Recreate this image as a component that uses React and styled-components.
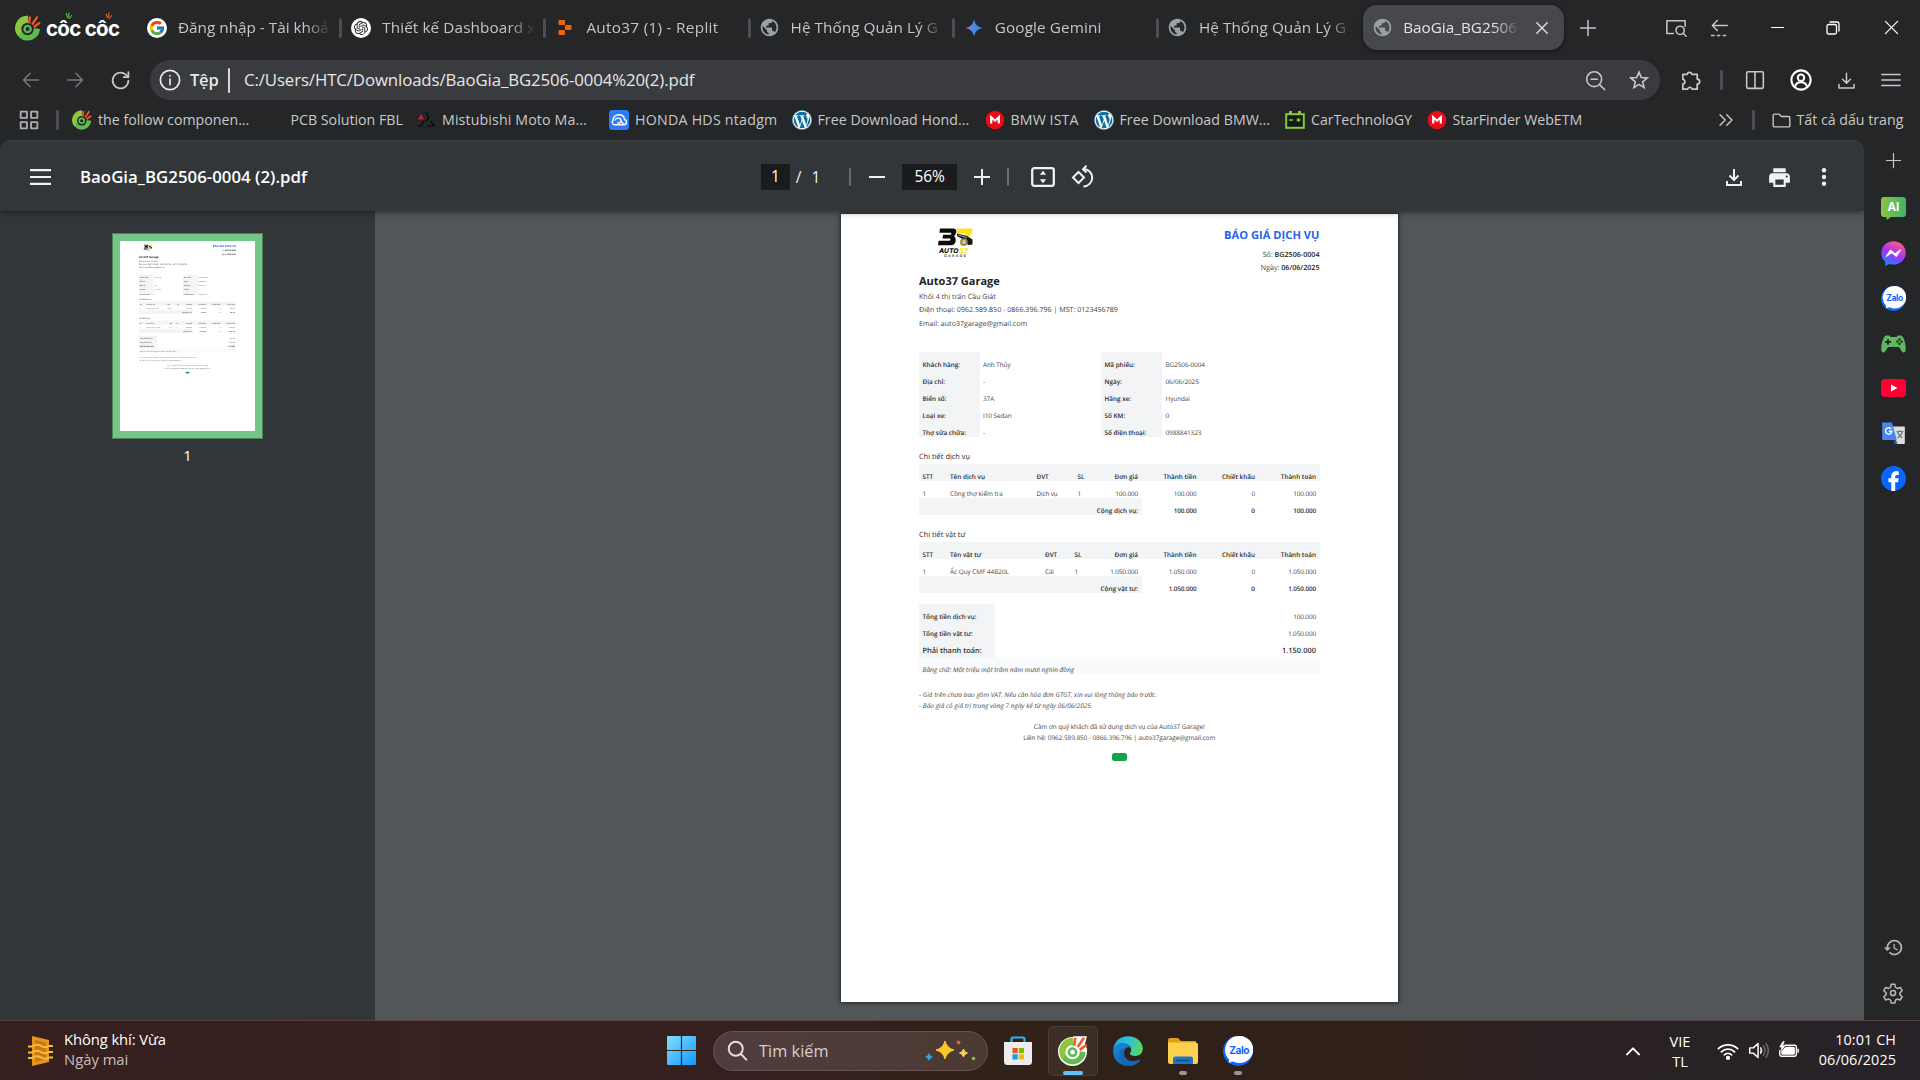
import React from "react";
import styled, { createGlobalStyle, css } from "styled-components";
import { FcGoogle } from "react-icons/fc";
import { SiOpenai } from "react-icons/si";
import { FaWordpress } from "react-icons/fa";
import { MdPublic, MdPrint, MdOutlineHistory } from "react-icons/md";

const Global = createGlobalStyle`
  * { box-sizing: border-box; }
  html, body { margin: 0; padding: 0; background: #242628; }
  body { font-family: "Open Sans", "Noto Sans", sans-serif; overflow: hidden; }
  svg { display: block; flex: none; }
`;

/* ---------- layout ---------- */
const Screen = styled.div`
  width: 1920px;
  height: 1080px;
  display: flex;
  flex-direction: column;
  background: #242628;
  overflow: hidden;
`;
const Row = styled.div`
  display: flex;
  align-items: center;
`;
const Slot = styled.div`
  width: ${(p) => p.$w}px;
  flex: none;
  display: flex;
  align-items: center;
  justify-content: center;
`;
const Txt = styled.span`
  white-space: pre;
  letter-spacing: ${(p) => p.$ls || 0}px;
`;
const Grow = styled.div`
  flex: 1;
`;

/* ---------- tab strip ---------- */
const TabStrip = styled(Row)`
  height: 55px;
  padding-left: 15px;
`;
const Brand = styled(Row)`
  width: 123px;
  flex: none;
  gap: 5px;
`;
const BrandText = styled.span`
  position: relative;
  font-family: Inter, "Open Sans", sans-serif;
  font-weight: 700;
  font-size: 20.5px;
  line-height: 24px;
  letter-spacing: -0.7px;
  color: #fff;
  white-space: pre;
  padding-top: 3px;
`;
const Ticks = styled.svg`
  position: absolute;
  left: ${(p) => p.$x}px;
  top: -2px;
`;
const Tab = styled.div`
  width: ${(p) => (p.$active ? 201 : 204.2)}px;
  height: 45px;
  flex: none;
  display: flex;
  align-items: center;
  padding-left: 9px;
  border-radius: 14px;
  color: ${(p) => (p.$active ? "#e3e3e3" : "#c3c5c7")};
  background: ${(p) => (p.$active ? "#47484c" : "transparent")};
  box-shadow: ${(p) => (p.$active ? "0 1px 4px rgba(0,0,0,.5)" : "none")};
`;
const TabTitle = styled.div`
  width: ${(p) => p.$w}px;
  margin-left: 11px;
  font-size: 15.3px;
  letter-spacing: ${(p) => p.$ls || 0}px;
  line-height: 24px;
  padding-bottom: 2px;
  white-space: pre;
  overflow: hidden;
  mask-image: linear-gradient(90deg, #000 calc(100% - 26px), transparent);
`;
const TabDivider = styled.div`
  width: 3px;
  height: 20px;
  margin-left: 8px;
  background: #4b4d50;
  border-radius: 2px;
`;

/* ---------- address row ---------- */
const AddressRow = styled(Row)`
  height: 50px;
  padding-left: 9px;
  color: #c7c8ca;
`;
const Omnibox = styled(Row)`
  width: 1510px;
  height: 40px;
  margin-left: 7px;
  border-radius: 20px;
  background: #3a3b3f;
  padding-left: 8px;
  color: #e6e7e8;
  font-size: 16.8px;
`;
const Scheme = styled.span`
  width: 38px;
  margin-left: 8px;
  padding-bottom: 2px;
  font-size: 16.5px;
  font-weight: 600;
  letter-spacing: -0.2px;
`;
const Bar = styled.div`
  width: ${(p) => p.$w || 2}px;
  height: ${(p) => p.$h || 20}px;
  background: ${(p) => p.$c || "#4b4d50"};
  border-radius: 1px;
  flex: none;
`;
const Url = styled.span`
  flex: 1;
  margin-left: 14px;
  padding-bottom: 2px;
  letter-spacing: ${(p) => p.$ls}px;
`;

/* ---------- bookmarks ---------- */
const Bookmarks = styled(Row)`
  height: 40px;
  padding: 5px 0;
  padding-left: 2px;
  color: #c7c8ca;
  font-size: 14.2px;
  margin-top: -5px;
`;
const Bookmark = styled.div`
  width: ${(p) => p.$w}px;
  flex: none;
  display: flex;
  align-items: center;
  gap: 6px;
  white-space: pre;
  letter-spacing: ${(p) => p.$ls || 0}px;
`;
const BookmarkName = styled.span`
  padding-bottom: 2px;
`;

/* ---------- pdf viewer ---------- */
const Main = styled.div`
  flex: none;
  height: 880px;
  display: flex;
`;
const Viewer = styled.div`
  width: 1864px;
  display: flex;
  flex-direction: column;
  border-radius: 10px 10px 0 0;
  overflow: hidden;
  background: #323639;
`;
const PdfBar = styled(Row)`
  height: 71px;
  flex: none;
  position: relative;
  z-index: 2;
  padding-top: 2px;
  padding-left: 16px;
  background: #323639;
  border-top: 1px solid #3b3e41;
  box-shadow: 0 1px 6px rgba(0, 0, 0, 0.5);
  color: #f1f1f1;
  font-size: 15.5px;
`;
const PdfTitle = styled.div`
  width: 681px;
  padding-left: 15px;
  padding-bottom: 1px;
  font-weight: 600;
  font-size: 16.8px;
  color: #fff;
  white-space: pre;
  letter-spacing: ${(p) => p.$ls}px;
`;
const Field = styled.div`
  width: ${(p) => p.$w}px;
  height: 26px;
  line-height: 25px;
  text-align: center;
  background: #191b1c;
  color: #fff;
  letter-spacing: -0.1px;
`;
const PdfBody = styled.div`
  flex: 1;
  display: flex;
  min-height: 0;
`;
const Thumbs = styled.div`
  width: 375px;
  flex: none;
  display: flex;
  flex-direction: column;
  align-items: center;
  padding-top: 22px;
  background: #323639;
  color: #fff;
  font-size: 15px;
`;
const ThumbFrame = styled.div`
  width: 151px;
  height: 206px;
  border: 1px solid #4f8259;
  background: #74c686;
  padding: 7px;
`;
const ThumbClip = styled.div`
  width: 135px;
  height: 190px;
  overflow: hidden;
  background: #fff;
`;
const ThumbScale = styled.div`
  width: 557px;
  transform: scale(0.2424);
  transform-origin: 0 0;
`;
const ThumbNo = styled.div`
  margin-top: 5px;
  line-height: 22px;
`;
const Canvas = styled.div`
  flex: 1;
  background: #525659;
  display: flex;
  justify-content: center;
  padding-top: 3px;
`;
const Sheet = styled.div`
  width: 557px;
  height: 788px;
  flex: none;
  background: #fff;
  padding: 13px 78.5px 0 78px;
  color: #444;
  text-rendering: geometricPrecision;
  box-shadow: ${(p) => (p.$flat ? "none" : "0 0 4px 1px rgba(0,0,0,.55)")};
`;
const SheetTop = styled.div`
  display: flex;
  justify-content: space-between;
  height: 47px;
`;
const Logo = styled.svg`
  margin-left: 19px;
  margin-top: 1px;
`;
const Heading = styled.div`
  text-align: right;
  font-size: 7.1px;
  line-height: 13.3px;
  b { color: #222; font-weight: 600; letter-spacing: 0.03px; }
`;
const DocTitle = styled.div`
  color: #2563eb;
  font-weight: 700;
  font-size: 11.1px;
  line-height: 18px;
  margin-bottom: 4px;
  letter-spacing: ${(p) => p.$ls}px;
`;
const Garage = styled.div`
  font-weight: 700;
  font-size: 11px;
  line-height: 16px;
  color: #222;
  letter-spacing: 0px;
  margin-bottom: 0.8px;
`;
const Contact = styled.div`
  font-size: 7.1px;
  line-height: 13.4px;
  white-space: pre;
  letter-spacing: 0.01px;
`;
const InfoGrid = styled.div`
  display: grid;
  grid-template-columns: 60.5px 121.5px 61px 1fr;
  grid-auto-rows: 17px;
  margin-top: 21.2px;
  font-size: 6.35px;
`;
const Cell = styled.div`
  height: ${(p) => p.$h || 17}px;
  padding: ${(p) => p.$pt || 7.4}px 3.5px 0;
  line-height: 10px;
  white-space: nowrap;
  text-align: ${(p) => p.$align || "left"};
  background: ${(p) => (p.$fill ? "#f3f4f6" : "transparent")};
  ${(p) => p.$bold && css`font-weight: 600; color: #2d2d2d;`}
  ${(p) => p.$span && css`grid-column: span ${p.$span};`}
  font-size: ${(p) => (p.$fs ? p.$fs + "px" : "inherit")};
  letter-spacing: ${(p) => p.$ls || 0}px;
`;
const SectionTitle = styled.div`
  margin-top: ${(p) => p.$mt}px;
  font-size: 7.3px;
  line-height: 11px;
  font-weight: 500;
  color: #222;
  letter-spacing: 0.06px;
`;
const Items = styled.div`
  display: grid;
  grid-template-columns: ${(p) => p.$cols};
  grid-auto-rows: 17px;
  margin-top: 1px;
  font-size: 6.35px;
`;
const Totals = styled.div`
  display: grid;
  grid-template-columns: 75.7px 1fr;
  margin-top: 11px;
  font-size: 6.35px;
`;
const Words = styled.div`
  height: 17px;
  padding: 7.4px 3.5px 0;
  line-height: 10px;
  font-size: 6.4px;
  letter-spacing: 0.06px;
  font-style: italic;
  background: #f9fafb;
`;
const Notes = styled.div`
  margin-top: 14.5px;
  font-size: 6.4px;
  letter-spacing: 0.05px;
  line-height: 11.4px;
  font-style: italic;
`;
const Thanks = styled.div`
  margin-top: 9.5px;
  font-size: 6.4px;
  letter-spacing: -0.04px;
  line-height: 11.4px;
  text-align: center;
`;
const Pill = styled.div`
  width: 15px;
  height: 8px;
  margin: 9px auto 0;
  border-radius: 2.5px;
  background: #16a34a;
`;

/* ---------- side panel ---------- */
const Side = styled.div`
  width: 56px;
  display: flex;
  flex-direction: column;
  align-items: center;
  padding: 0 0 5px 2px;
  color: #c3c5c7;
`;
const SideItem = styled.div`
  height: ${(p) => p.$h || 45}px;
  flex: none;
  display: flex;
  align-items: center;
`;

/* ---------- taskbar ---------- */
const Taskbar = styled(Row)`
  height: 60px;
  flex: none;
  border-top: 1px solid #51403f;
  background: linear-gradient(90deg, #35201f 0%, #38211f 22%, #35201e 42%, #322118 52%, #2e2119 60%, #302019 72%, #2c2122 80%, #272226 90%, #272328 100%);
  color: #fff;
  font-size: 14.8px;
`;
const Weather = styled(Row)`
  width: 639px;
  flex: none;
  padding-left: 28px;
  gap: 11px;
  line-height: 20px;
`;
const WeatherText = styled.div`
  display: flex;
  flex-direction: column;
  padding-bottom: 3px;
`;
const Muted = styled.div`
  color: #c9bebd;
  white-space: pre;
`;
const Search = styled(Row)`
  width: 275px;
  flex: none;
  height: 40px;
  border-radius: 20px;
  border: 1px solid #66534f;
  background: linear-gradient(90deg, #503d3e, #4b3a33);
  padding: 0 11px 0 13px;
  gap: 11px;
  color: #d8d0ce;
  font-size: 16.3px;
`;
const AppSlot = styled.div`
  width: 50px;
  height: 50px;
  flex: none;
  margin-right: 5px;
  border-radius: 5px;
  position: relative;
  display: flex;
  align-items: center;
  justify-content: center;
  background: ${(p) => (p.$active ? "rgba(255,255,255,.06)" : "transparent")};
  border: 1px solid ${(p) => (p.$active ? "rgba(255,255,255,.07)" : "transparent")};
`;
const Mark = styled.div`
  position: absolute;
  bottom: 0px;
  left: ${(p) => (p.$on ? 14 : 20)}px;
  width: ${(p) => (p.$on ? 20 : 8)}px;
  height: 4px;
  border-radius: 2px;
  background: ${(p) => (p.$on ? "#60c2f8" : "#9c9492")};
`;
const Lang = styled.div`
  width: 50px;
  text-align: center;
  font-size: 14.6px;
  line-height: 20px;
`;
const Clock = styled.div`
  margin-left: auto;
  padding-right: 24px;
  text-align: right;
  font-size: 14.4px;
  line-height: 20px;
  letter-spacing: 0.08px;
  padding-bottom: 1px;
`;

/* ---------- drawings ---------- */
const Line = ({ s = 24, sw = 1.5, children, vb = 24, color = "currentColor" }) => (
  <svg width={s} height={s} viewBox={`0 0 ${vb} ${vb}`} fill="none" stroke={color} strokeWidth={sw} strokeLinecap="round" strokeLinejoin="round">
    {children}
  </svg>
);
const CocCoc = ({ s = 26, ring }) => (
  <svg width={s} height={s} viewBox="0 0 26 26">
    {ring && <circle cx="12.6" cy="13.4" r="12.6" fill="#fff" />}
    {ring && <path d="M13 .3h12l-3 13z" fill="#fff" />}
    <path d={ring ? "M13 1.8A11.4 11.4 0 1 0 24 14l-6-1-5-5z" : "M13 .8A12.4 12.4 0 1 0 25 14l-7-1-5-5z"} fill="#5fbb4c" />
    <path d={ring ? "M13 1.8A11.4 11.4 0 0 0 4 20.5L13 8z" : "M13 .8A12.4 12.4 0 0 0 3 21L13 8z"} fill="#8cc63f" />
    <circle cx="12.6" cy="14" r="6.2" fill={ring ? "#fff" : "#242628"} />
    <circle cx="12.6" cy="14" r="4.3" fill="#5cb85a" />
    <circle cx="12.6" cy="14" r="2" fill={ring ? "#fff" : "#242628"} />
    {ring && <path d="M13 9V1h11.5L19 13z" fill="#fff" />}
    <path d="M14 8.5L15 1.5M17 9.6L22.6 1.6M18.8 12L25 7.6" stroke="#f1592a" strokeWidth="2.3" />
  </svg>
);
const Globe = () => <MdPublic size={21} color="#9aa0a6" />;
const Replit = () => (
  <svg width="20" height="20" viewBox="0 0 20 20" fill="#f26207">
    <rect x="3.5" y="2" width="6.5" height="5" rx="1" />
    <rect x="10" y="7" width="6.5" height="5" rx="1" />
    <rect x="3.5" y="12" width="6.5" height="5" rx="1" />
  </svg>
);
const Openai = () => (
  <svg width="20" height="20" viewBox="0 0 20 20">
    <circle cx="10" cy="10" r="10" fill="#fff" />
    <SiOpenai x="3" y="3" size={14} color="#222" />
  </svg>
);
const GoogleDisc = () => (
  <svg width="20" height="20" viewBox="0 0 20 20">
    <circle cx="10" cy="10" r="10" fill="#fff" />
    <FcGoogle x="1.5" y="1.5" size={17} />
  </svg>
);
const Gemini = () => (
  <svg width="20" height="20" viewBox="0 0 20 20">
    <defs>
      <linearGradient id="gem" x1="0" x2="1">
        <stop offset="0.1" stopColor="#9b72cb" />
        <stop offset="0.5" stopColor="#4b84e8" />
        <stop offset="0.9" stopColor="#1ba1e3" />
      </linearGradient>
    </defs>
    <path d="M10 1.5Q11.3 8.7 18.5 10Q11.3 11.3 10 18.5Q8.7 11.3 1.5 10Q8.7 8.7 10 1.5z" fill="url(#gem)" />
  </svg>
);
const Wp = () => (
  <svg width="20" height="20" viewBox="0 0 20 20">
    <circle cx="10" cy="10" r="9.8" fill="#fff" />
    <FaWordpress x="0" y="0" size={20} color="#0f6fa0" />
  </svg>
);
const Mega = () => (
  <svg width="20" height="20" viewBox="0 0 20 20">
    <circle cx="10" cy="10" r="9.3" fill="#e90c18" />
    <path d="M6.2 13.5V7.3L10 10.8L13.8 7.3V13.5" fill="none" stroke="#fff" strokeWidth="2.2" />
  </svg>
);
const Battery = () => (
  <svg width="20" height="20" viewBox="0 0 20 20">
    <path d="M4 1h3v3h6V1h3v3H4z" fill="#8ac53e" />
    <rect x="1.2" y="4.2" width="17.6" height="13.6" fill="#121b12" stroke="#8ac53e" strokeWidth="2" />
    <path d="M4 10h4M11.5 10h4M13.5 8v4" stroke="#8ac53e" strokeWidth="1.6" />
  </svg>
);
const Honda = () => (
  <svg width="20" height="20" viewBox="0 0 20 20">
    <rect width="20" height="20" rx="3" fill="#2a7cf7" />
    <path d="M5.2 14.8A2.7 2.7 0 0 1 4 10.3C4 7 6.8 4.8 10 4.8s5.2 2.2 5.5 4.7c2.8 .8 2.8 5-.7 5.3H5.2M6 10.5c.5-3 5.5-3.3 6 0 .3 2.3-2.5 3.3-3.5 1.8M12 10.5c.5 2 1.5 3.3 3 4.2" fill="none" stroke="#fff" strokeWidth="1.4" />
  </svg>
);
const Mitsu = () => (
  <svg width="20" height="20" viewBox="0 0 20 20">
    <path d="M5 4l3 5.5H2z" fill="#d81f26" />
    <path d="M10 2l3 6-3 3M12 16h6l-3-5M8 11l-3 5H2" fill="none" stroke="#0c0c0c" strokeWidth="1.6" />
  </svg>
);
const Zalo = ({ s = 25 }) => (
  <svg width={s} height={s} viewBox="0 0 26 26">
    <circle cx="13" cy="13" r="13" fill="#0a68ff" />
    <path d="M14 0a11.7 11.7 0 1 1-5 22l-4.5 1.2c1-1 1-2 .6-3A12 12 0 0 1 14 0z" fill="#fff" />
    <text x="14" y="15.3" fontSize="8.8" fontWeight="700" fill="#0a68ff" textAnchor="middle" fontFamily="Inter, sans-serif" letterSpacing="-.4">Zalo</text>
  </svg>
);
const AiBubble = () => (
  <svg width="25" height="25" viewBox="0 0 25 25">
    <defs>
      <linearGradient id="ai" x1="0" x2="1">
        <stop offset="0" stopColor="#8bc53f" />
        <stop offset="1" stopColor="#3fb36b" />
      </linearGradient>
    </defs>
    <path d="M3 2h19a3 3 0 0 1 3 3v14a3 3 0 0 1-3 3H10l-4.5 3V22H3a3 3 0 0 1-3-3V5a3 3 0 0 1 3-3z" fill="url(#ai)" />
    <text x="12.3" y="15.5" fontSize="11.5" fontWeight="700" fill="#fff" textAnchor="middle" fontFamily="Inter, sans-serif">AI</text>
  </svg>
);
const Messenger = () => (
  <svg width="25" height="25" viewBox="0 0 25 25">
    <defs>
      <linearGradient id="ms" x1="0.2" y1="1" x2="0.7" y2="0">
        <stop offset="0" stopColor="#0a8cff" />
        <stop offset="0.5" stopColor="#a033ff" />
        <stop offset="1" stopColor="#ff5c7a" />
      </linearGradient>
    </defs>
    <path d="M12.5 .3C5.5 .3 .3 5.4 .3 12.1c0 3.6 1.5 6.7 4 8.9V25l3.8-2.1c1.4 .4 2.9 .7 4.4 .7 7 0 12.2-5.1 12.2-11.7S19.5 .3 12.5 .3z" fill="url(#ms)" />
    <path d="M5.3 15.3L9.6 9.2l4.4 3.9L19.5 9l-4.2 6.3-4.4-3.8z" fill="#fff" stroke="#fff" strokeWidth="1.2" strokeLinejoin="round" />
  </svg>
);
const Gamepad = () => (
  <svg width="25" height="18" viewBox="0 0 25 18">
    <path d="M5.5 .5h3l1 1.5h6l1-1.5h3c3 0 5.3 7.5 5.3 14 0 3.5-2.8 3.8-4.3 1.5L18 12H7l-2.5 4C3 18.3 .2 18 .2 14.5 .2 8 2.5 .5 5.5 .5z" fill="#5fb761" />
    <path d="M7 4.2v5.6M4.2 7h5.6" stroke="#242628" strokeWidth="1.8" />
    <g fill="#242628"><circle cx="18.5" cy="4.5" r="1.2" /><circle cx="18.5" cy="8.8" r="1.2" /><circle cx="16.3" cy="6.6" r="1.2" /><circle cx="20.7" cy="6.6" r="1.2" /></g>
  </svg>
);
const Youtube = () => (
  <svg width="25" height="18" viewBox="0 0 25 18">
    <rect width="25" height="18" rx="4" fill="#ff0033" />
    <path d="M10 5.5l6.5 3.5L10 12.5z" fill="#fff" />
  </svg>
);
const Translate = () => (
  <svg width="23" height="23" viewBox="0 0 23 23">
    <path d="M10 4.5h12q.8 0 .8 .8V21q0 .9-.8 .9h-8z" fill="#dedede" />
    <path d="M11.5 21.8h4l-2-5z" fill="#3a56c5" />
    <path d="M.9 .5H10l4.8 17.5H.9Q.2 18 .2 17.3V1.2Q.2 .5 .9 .5z" fill="#4a86ee" />
    <path d="M14.5 9.5h7M18 8v1.5M15.5 9.5q1 4 5 6.5M20.5 9.5q-1 4-5 6.5" stroke="#6b7f86" strokeWidth="1.2" fill="none" />
    <path d="M9.3 7a3.2 3.2 0 1 0 .6 2.2H6.8" stroke="#fff" strokeWidth="1.4" fill="none" />
  </svg>
);
const Facebook = () => (
  <svg width="25" height="25" viewBox="0 0 25 25">
    <circle cx="12.5" cy="12.5" r="12.5" fill="#0866ff" />
    <path d="M10.3 25v-8.7H7.4v-4h2.9v-1.6c0-3.8 2-5.5 5-5.5 1 0 1.9 .1 2.5 .3v3.4h-1.6c-1.6 0-2 .8-2 2v1.4h3.5l-.7 4h-2.8V25z" fill="#fff" />
  </svg>
);
const WinLogo = () => (
  <svg width="29" height="29" viewBox="0 0 29 29">
    <defs>
      <linearGradient id="wn" x1="0" y1="0" x2="1" y2="1">
        <stop offset="0" stopColor="#83e0ff" /><stop offset="1" stopColor="#0f98ff" />
      </linearGradient>
    </defs>
    <path d="M1 0h12.9v13.9H0V1q0-1 1-1zM15.1 0H28q1 0 1 1v12.9H15.1zM0 15.1h13.9V29H1q-1 0-1-1zM15.1 15.1H29V28q0 1-1 1H15.1z" fill="url(#wn)" />
  </svg>
);
const Star4 = ({ x, y, r, c }) => (
  <path d={`M${x} ${y - r}Q${x + r * 0.2} ${y - r * 0.2} ${x + r} ${y}Q${x + r * 0.2} ${y + r * 0.2} ${x} ${y + r}Q${x - r * 0.2} ${y + r * 0.2} ${x - r} ${y}Q${x - r * 0.2} ${y - r * 0.2} ${x} ${y - r}z`} fill={c} stroke={c} strokeWidth="1" strokeLinejoin="round" />
);
const Sparkles = () => (
  <svg width="52" height="24" viewBox="0 0 52 24">
    <Star4 x={21} y={11} r={9} c="#fbc72d" />
    <Star4 x={39.5} y={14} r={4} c="#fbcf5a" />
    <Star4 x={5} y={18} r={3.2} c="#2aa5f0" />
    <circle cx="34.5" cy="3.5" r="2" fill="#e2603a" />
    <circle cx="49.5" cy="19.5" r="1.8" fill="#8cc04a" />
  </svg>
);
const Store = () => (
  <svg width="30" height="30" viewBox="0 0 30 30">
    <path d="M8.5 7V3q0-1.5 1.5-1.5h10q1.5 0 1.5 1.5v4" fill="none" stroke="#29b5f0" strokeWidth="2.2" />
    <path d="M1 6h28v19.5q0 3.5-3.5 3.5h-21Q1 29 1 25.5z" fill="#ededed" />
    <path d="M9.5 12h5.2v5.2H9.5z" fill="#f25022" /><path d="M15.8 12H21v5.2h-5.2z" fill="#7fba00" />
    <path d="M9.5 18.3h5.2v5.2H9.5z" fill="#00a4ef" /><path d="M15.8 18.3H21v5.2h-5.2z" fill="#ffb900" />
  </svg>
);
const Edge = () => (
  <svg width="30" height="30" viewBox="0 0 30 30">
    <defs>
      <linearGradient id="e1" x1="0" y1="0.3" x2="1" y2="0.5"><stop offset="0" stopColor="#23a6e0" /><stop offset="0.5" stopColor="#2ec3d8" /><stop offset="1" stopColor="#5bd95a" /></linearGradient>
      <linearGradient id="e2" x1="0" y1="0" x2="1" y2="1"><stop offset="0" stopColor="#1b8edb" /><stop offset="1" stopColor="#0f4f9e" /></linearGradient>
    </defs>
    <path d="M.3 13C1.2 5.5 7 .2 15 .2c9 0 14.8 6 14.8 12.3 0 4.6-3.3 7.5-7.6 7.5-3.5 0-5.3-1.3-5.3-2.5 0-.9 1.3-1.5 1.3-3.8 0-3.4-3.6-6.2-8.2-6.2C5.5 7.5 2 9.5 .3 13z" fill="url(#e1)" />
    <path d="M.2 14.5C.8 9.8 5 7.3 10 7.3c3.5 0 6.5 1.7 7.7 4.2-1.5-.9-6.7-.5-6.7 5.5 0 6.5 6 10 10.5 8.8l4.5-2c1-.4 1.5 .3 1 1C24.5 28 20 30 15.5 30 6.5 30-.7 23 .2 14.5z" fill="url(#e2)" />
    <path d="M11 17c0-3 1.5-4.7 3-5.2-5-.6-8 3.2-7.5 8 .5 5.2 4.8 9.7 10.5 10 4-.2 8-2.3 9.8-5.2 .4-.8-.2-1.2-1-.8-6.8 3.6-14.8 .2-14.8-6.8z" fill="#1466b8" />
  </svg>
);
const Folder = () => (
  <svg width="30" height="28" viewBox="0 0 30 28">
    <path d="M0 3q0-2 2-2h8l3 3h15v6H0z" fill="#e0a010" />
    <path d="M0 5.5h27.5Q30 5.5 30 8v17q0 2-2 2H2q-2 0-2-2z" fill="#fdd04e" />
    <path d="M5 27v-5q0-2.5 2.5-2.5h15Q25 19.5 25 22v5z" fill="#1976c9" />
    <path d="M8 23.5h13" stroke="#0f4f90" strokeWidth="1.5" />
  </svg>
);
const AirIcon = () => (
  <svg width="25" height="30" viewBox="0 0 25 30">
    <path d="M4 0l17 4v22L4 30z" fill="#e8951c" />
    <path d="M7 4l11 2.5v17L7 26z" fill="#c87a10" />
    <path d="M0 10.5h4q5-3 9-.5t8 0h4M0 16.5h4q5-3 9-.5t8 0h4M0 22h4q5-3 9-.5t8 0h4" stroke="#f5bd3f" strokeWidth="2" fill="none" />
  </svg>
);
const GarageLogo = () => (
  <Logo width="36" height="31" viewBox="0 0 36 31">
    <path d="M19 0.5h15.5l-.6 4.5q-5 5-6 12.5h-6q1-7 6-12h-9z" fill="#ffe11a" />
    <path d="M2 .5h13q3.5 0 3.3 3.2-.2 3-2.3 4.6 2 1 1.8 4-.3 5-5 5H0l.6-4.5h10.4q1.5 0 1.6-1.2t-1.3-1.2H4.5l.6-3.7h6.7q1.5 0 1.6-1t-1.3-1H1.4z" fill="#0b0b0b" />
    <path d="M19 5.5l10 2.5 5.5 3.5v5l-4.5 .5-3-4.5-8-4.5z" fill="#151515" />
    <path d="M20 7l9 2.5" stroke="#fff" strokeWidth=".6" />
    <circle cx="26" cy="14" r="3.8" fill="#8b8350" /><circle cx="26" cy="14" r="2" fill="#ddd08a" />
    <text x="1" y="25.2" fontSize="6.5" fontWeight="800" fontStyle="italic" fontFamily="Inter, sans-serif" textLength="19.5" lengthAdjust="spacingAndGlyphs" fill="#111">AUTO</text>
    <text x="20.8" y="25.2" fontSize="6.5" fontWeight="800" fontStyle="italic" fontFamily="Inter, sans-serif" textLength="9.5" lengthAdjust="spacingAndGlyphs" fill="#ffe11a">37</text>
    <text x="6" y="29" fontSize="3.6" fontWeight="600" fontFamily="Inter, sans-serif" textLength="22" fill="#333">GARAGE</text>
  </Logo>
);

/* ---------- quotation ---------- */
const info = [
  ["Khách hàng:", "Anh Thủy", "Mã phiếu:", "BG2506-0004"],
  ["Địa chỉ:", "-", "Ngày:", "06/06/2025"],
  ["Biển số:", "37A", "Hãng xe:", "Hyundai"],
  ["Loại xe:", "I10 Sedan", "Số KM:", "0"],
  ["Thợ sửa chữa:", "-", "Số điện thoại:", "0988841323"],
];
const aligns = ["left", "left", "left", "left", "right", "right", "right", "right"];

const ItemTable = ({ cols, head, row, label, sum }) => (
  <Items $cols={cols}>
    {head.map((h, i) => (
      <Cell key={h} $fill $bold $ls={0.01} $align={aligns[i]}>{h}</Cell>
    ))}
    {row.map((v, i) => (
      <Cell key={i} $align={aligns[i]} $ls={i === 1 ? 0 : -0.1}>{v}</Cell>
    ))}
    <Cell $fill $span={5} $align="right" $bold $ls={0.03}>{label}</Cell>
    <Cell $bold $align="right" $ls={-0.12}>{sum}</Cell>
    <Cell $bold $align="right">0</Cell>
    <Cell $bold $align="right" $ls={-0.12}>{sum}</Cell>
  </Items>
);

const Quotation = ({ flat }) => (
  <Sheet $flat={flat}>
    <SheetTop>
      <GarageLogo />
      <Heading>
        <DocTitle $ls={0.03}>BÁO GIÁ DỊCH VỤ</DocTitle>
        <div>Số: <b>BG2506-0004</b></div>
        <div>Ngày: <b>06/06/2025</b></div>
      </Heading>
    </SheetTop>
    <Garage>Auto37 Garage</Garage>
    <Contact>Khối 4 thị trấn Cầu Giát</Contact>
    <Contact>Điện thoại: 0962.589.850 - 0866.396.796 | MST: 0123456789</Contact>
    <Contact>Email: auto37garage@gmail.com</Contact>
    <InfoGrid>
      {info.map(([a, b, c, d]) => (
        <React.Fragment key={a}>
          <Cell $fill $bold>{a}</Cell>
          <Cell $ls={-0.04}>{b}</Cell>
          <Cell $fill $bold>{c}</Cell>
          <Cell $ls={-0.04}>{d}</Cell>
        </React.Fragment>
      ))}
    </InfoGrid>
    <SectionTitle $mt={15}>Chi tiết dịch vụ</SectionTitle>
    <ItemTable
      cols="27.5px 86.5px 41px 21.5px 46px 58.5px 58.5px 61px"
      head={["STT", "Tên dịch vụ", "ĐVT", "SL", "Đơn giá", "Thành tiền", "Chiết khấu", "Thành toán"]}
      row={["1", "Công thợ kiểm tra", "Dịch vụ", "1", "100.000", "100.000", "0", "100.000"]}
      label="Cộng dịch vụ:"
      sum="100.000"
    />
    <SectionTitle $mt={15}>Chi tiết vật tư</SectionTitle>
    <ItemTable
      cols="27.5px 95px 29.5px 24.5px 46px 58.5px 58.5px 61px"
      head={["STT", "Tên vật tư", "ĐVT", "SL", "Đơn giá", "Thành tiền", "Chiết khấu", "Thành toán"]}
      row={["1", "Ắc Quy CMF 44B20L", "Cái", "1", "1.050.000", "1.050.000", "0", "1.050.000"]}
      label="Cộng vật tư:"
      sum="1.050.000"
    />
    <Totals>
      <Cell $fill $bold>Tổng tiền dịch vụ:</Cell>
      <Cell $align="right" $ls={-0.08}>100.000</Cell>
      <Cell $fill $bold>Tổng tiền vật tư:</Cell>
      <Cell $align="right" $ls={-0.08}>1.050.000</Cell>
      <Cell $fill $bold $fs={7.4} $h={19} $pt={8}>Phải thanh toán:</Cell>
      <Cell $bold $align="right" $fs={7.4} $h={19} $pt={8} $ls={0.05}>1.150.000</Cell>
    </Totals>
    <Words>Bằng chữ: Một triệu một trăm năm mươi nghìn đồng</Words>
    <Notes>
      <div>- Giá trên chưa bao gồm VAT. Nếu cần hóa đơn GTGT, xin vui lòng thông báo trước.</div>
      <div>- Báo giá có giá trị trong vòng 7 ngày kể từ ngày 06/06/2025.</div>
    </Notes>
    <Thanks>
      <div>Cảm ơn quý khách đã sử dụng dịch vụ của Auto37 Garage!</div>
      <div>Liên hệ: 0962.589.850 - 0866.396.796 | auto37garage@gmail.com</div>
    </Thanks>
    <Pill />
  </Sheet>
);

const tabs = [
  { icon: <GoogleDisc />, title: "Đăng nhập - Tài khoả", ls: 0 },
  { icon: <Openai />, title: "Thiết kế Dashboard x", ls: 0.1 },
  { icon: <Replit />, title: "Auto37 (1) - Replit", ls: 0.3 },
  { icon: <Globe />, title: "Hệ Thống Quản Lý G", ls: 0.05 },
  { icon: <Gemini />, title: "Google Gemini", ls: 0.12 },
  { icon: <Globe />, title: "Hệ Thống Quản Lý G", ls: 0.05 },
];

const bookmarks = [
  { w: 192.5, ls: 0, icon: <CocCoc s={20} />, text: "the follow componen..." },
  { w: 151.5, ls: 0, icon: <svg width="20" height="20" />, text: "PCB Solution FBL" },
  { w: 193, ls: 0.13, icon: <Mitsu />, text: "Mistubishi Moto Ma..." },
  { w: 182.5, ls: 0.25, icon: <Honda />, text: "HONDA HDS ntadgm" },
  { w: 193, ls: 0.03, icon: <Wp />, text: "Free Download Hond..." },
  { w: 109, ls: 0.1, icon: <Mega />, text: "BMW ISTA" },
  { w: 191.5, ls: 0.04, icon: <Wp />, text: "Free Download BMW..." },
  { w: 141.5, ls: -0.05, icon: <Battery />, text: "CarTechnoloGY" },
  { w: 290, ls: -0.05, icon: <Mega />, text: "StarFinder WebETM" },
];

export default function App() {
  return (
    <Screen>
      <Global />
      <TabStrip>
        <Brand>
          <CocCoc />
          <BrandText>
            côc côc
            <Ticks $x={19} width="8" height="9" viewBox="0 0 8 9"><path d="M1 1l2 5M4 .5l-.5 5M7 3L4 7" stroke="#4fb648" strokeWidth="1.2" /></Ticks>
            <Ticks $x={59} width="8" height="9" viewBox="0 0 8 9"><path d="M1 2l2 4M4 .5l-.5 5M7 3L4 7" stroke="#f1592a" strokeWidth="1.2" /></Ticks>
          </BrandText>
        </Brand>
        {tabs.map((t, i) => (
          <Tab key={i}>
            <Slot $w={20}>{t.icon}</Slot>
            <TabTitle $w={154} $ls={t.ls}>{t.title}</TabTitle>
            {i < 5 && <TabDivider />}
          </Tab>
        ))}
        <Tab $active>
          <Slot $w={20}><Globe /></Slot>
          <TabTitle $w={117} $ls={0}>BaoGia_BG2506-</TabTitle>
          <Slot $w={43}><Line s={18} sw={1.8}><path d="M5 5l14 14M19 5L5 19" /></Line></Slot>
        </Tab>
        <Slot $w={48}><Line s={20} sw={1.8} color="#c3c5c7"><path d="M12 3v18M3 12h18" /></Line></Slot>
        <Grow />
        <Slot $w={43}>
          <Line s={22} sw={1.7} color="#c3c5c7"><path d="M9 18H2V4h20v6" /><circle cx="16.5" cy="14.5" r="4.5" /><path d="M20 18l3 3" /></Line>
        </Slot>
        <Slot $w={43}>
          <Line s={20} sw={1.8} color="#c3c5c7"><path d="M22 9H4M10 3L4 9l6 6" /><path d="M3 21h3M10 21h3M17 21h3" /></Line>
        </Slot>
        <Slot $w={74}><Bar $w={13} $h={1.5} $c="#fff" /></Slot>
        <Slot $w={38}>
          <Line s={14} sw={1.3} vb={14} color="#fff"><rect x="1" y="3.5" width="9.5" height="9.5" rx="1.5" /><path d="M4 1h7q2 0 2 2v7" /></Line>
        </Slot>
        <Slot $w={10} />
        <Slot $w={58}><Line s={15} sw={1.3} vb={16} color="#fff"><path d="M1.5 1.5l13 13M14.5 1.5l-13 13" /></Line></Slot>
      </TabStrip>

      <AddressRow>
        <Slot $w={44}><Line s={20} color="#77797c" sw={1.8}><path d="M21 12H3M11 4l-8 8 8 8" /></Line></Slot>
        <Slot $w={44}><Line s={20} color="#77797c" sw={1.8}><path d="M3 12h18M13 4l8 8-8 8" /></Line></Slot>
        <Slot $w={46}><Line s={21} sw={2}><path d="M21 12a9 9 0 1 1-3-6.7L21 8" /><path d="M21 2.5V8h-5.5" /></Line></Slot>
        <Omnibox>
          <Slot $w={24}><Line s={22} sw={1.9}><circle cx="12" cy="12" r="10.5" /><path d="M12 11v6M12 7.3v.2" /></Line></Slot>
          <Scheme>Tệp</Scheme>
          <Bar $h={25} $c="#d8d9da" />
          <Url $ls={-0.1}>C:/Users/HTC/Downloads/BaoGia_BG2506-0004%20(2).pdf</Url>
          <Slot $w={46}><Line s={21} sw={1.8} color="#c7c8ca"><circle cx="10.5" cy="10.5" r="8.5" /><path d="M17 17l5.5 5.5M7 10.5h7" /></Line></Slot>
          <Slot $w={42}><Line s={20} sw={1.9} color="#c7c8ca"><path d="M12 2.5l2.7 6.6 7.1 .5-5.4 4.6 1.7 6.9L12 17.3l-6.1 3.8 1.7-6.9L2.2 9.6l7.1-.5z" strokeLinejoin="miter" /></Line></Slot>
        </Omnibox>
        <Slot $w={60}><Line s={23} sw={1.8}><path d="M4 5.5h4.5a2.6 2.6 0 0 1 5 0H19v5a2.6 2.6 0 0 1 0 5.2V21h-5.3a2.4 2.4 0 0 0-4.7 0H4v-5.2a2.6 2.6 0 0 0 0-5.1z" /></Line></Slot>
        <Bar $w={3} />
        <Slot $w={64}><Line s={20} sw={1.9}><rect x="2" y="2" width="20" height="20" rx="1.5" /><path d="M12 2v20" /></Line></Slot>
        <Slot $w={28}><Line s={22} sw={2.2} color="#fff"><circle cx="12" cy="12" r="10.5" /><circle cx="12" cy="9.5" r="3.5" /><path d="M5.5 19.5q1-5 6.5-5t6.5 5" /></Line></Slot>
        <Slot $w={62}><Line s={19} sw={1.9}><path d="M12 3v12M7 10.5l5 5 5-5M2.5 17v4.5h19V17" /></Line></Slot>
        <Slot $w={28}><Line s={22} sw={1.8}><path d="M2 6h20M2 12h20M2 18h20" /></Line></Slot>
      </AddressRow>

      <Bookmarks>
        <Slot $w={54}>
          <Line s={20} sw={2.2} color="#a9abad"><rect x="2" y="2" width="7.5" height="7.5" /><rect x="14.5" y="2" width="7.5" height="7.5" /><rect x="2" y="14.5" width="7.5" height="7.5" /><rect x="14.5" y="14.5" width="7.5" height="7.5" /></Line>
        </Slot>
        <Bar $w={3} />
        <Slot $w={13} />
        {bookmarks.map((b, i) => (
          <Bookmark key={i} $w={b.w} $ls={b.ls}>{b.icon}<BookmarkName>{b.text}</BookmarkName></Bookmark>
        ))}
        <Line s={18} sw={1.9}><path d="M4 5l7 7-7 7M13 5l7 7-7 7" /></Line>
        <Slot $w={37}><Bar $w={3} /></Slot>
        <Bookmark $w={140} $ls={0}>
          <Line s={19} sw={1.7}><path d="M1.5 5.5q0-1.5 1.5-1.5h6l3 3h9q1.5 0 1.5 1.5v10q0 1.5-1.5 1.5H3q-1.5 0-1.5-1.5z" /></Line>
          <BookmarkName>Tất cả dấu trang</BookmarkName>
        </Bookmark>
      </Bookmarks>

      <Main>
        <Viewer>
          <PdfBar>
            <Slot $w={49}><svg width="21" height="16" viewBox="0 0 21 16"><path d="M0 1.2h21M0 8h21M0 14.8h21" stroke="#f1f1f1" strokeWidth="2.2" /></svg></Slot>
            <PdfTitle $ls={0.03}>BaoGia_BG2506-0004 (2).pdf</PdfTitle>
            <Slot $w={15} />
            <Field $w={29}>1</Field>
            <Slot $w={17}>/</Slot>
            <Slot $w={18}>1</Slot>
            <Slot $w={50}><Bar $w={1.5} $h={18} $c="#696c6e" /></Slot>
            <Slot $w={3}><svg width="16" height="16" viewBox="0 0 16 16"><path d="M0 8h16" stroke="#f1f1f1" strokeWidth="2" /></svg></Slot>
            <Slot $w={24} />
            <Field $w={55}>56%</Field>
            <Slot $w={49}><svg width="16" height="16" viewBox="0 0 16 16"><path d="M0 8h16M8 0v16" stroke="#f1f1f1" strokeWidth="2" /></svg></Slot>
            <Slot $w={4}><Bar $w={1.5} $h={18} $c="#696c6e" /></Slot>
            <Slot $w={66}>
              <svg width="24" height="20" viewBox="0 0 24 20"><rect x="1.2" y="1.2" width="21.6" height="17.6" rx="2" fill="none" stroke="#f1f1f1" strokeWidth="2.3" /><path d="M12 3.8l3.2 4H8.8zM12 16.2l3.2-4H8.8z" fill="#f1f1f1" /></svg>
            </Slot>
            <Slot $w={14}>
              <Line s={24} sw={2} color="#f1f1f1"><path d="M7.5 7l5.5 5.5-5.5 5.5L2 12.5z" strokeLinejoin="miter" /><path d="M12.5 4a8.7 8.7 0 1 1 0 17.4" strokeLinecap="butt" /><path d="M15.5 .8L12 4.2l3.5 3.3" strokeLinecap="butt" /></Line>
            </Slot>
            <Grow />
            <Slot $w={45}><svg width="16" height="17" viewBox="0 0 16 17" fill="none" stroke="#f1f1f1" strokeWidth="2"><path d="M8 0v10.5M3.5 6.5L8 11l4.5-4.5M1 12v4h14v-4" /></svg></Slot>
            <Slot $w={45}><MdPrint size={25} color="#f1f1f1" /></Slot>
            <Slot $w={45}><svg width="6" height="18" viewBox="0 0 6 18" fill="#f1f1f1"><circle cx="3" cy="2.2" r="2.2" /><circle cx="3" cy="9" r="2.2" /><circle cx="3" cy="15.8" r="2.2" /></svg></Slot>
            <Slot $w={17.5} />
          </PdfBar>
          <PdfBody>
            <Thumbs>
              <ThumbFrame>
                <ThumbClip><ThumbScale><Quotation flat /></ThumbScale></ThumbClip>
              </ThumbFrame>
              <ThumbNo>1</ThumbNo>
            </Thumbs>
            <Canvas><Quotation /></Canvas>
          </PdfBody>
        </Viewer>
        <Side>
          <SideItem $h={41}><Line s={19} sw={1.5} color="#c3c5c7"><path d="M12 3v18M3 12h18" /></Line></SideItem>
          <SideItem $h={52}><AiBubble /></SideItem>
          <SideItem $h={40}><Messenger /></SideItem>
          <SideItem $h={50}><Zalo /></SideItem>
          <SideItem $h={41}><Gamepad /></SideItem>
          <SideItem $h={48}><Youtube /></SideItem>
          <SideItem $h={42}><Translate /></SideItem>
          <SideItem $h={49}><Facebook /></SideItem>
          <Grow />
          <SideItem $h={45}><MdOutlineHistory size={21} color="#b4b6b8" /></SideItem>
          <SideItem $h={45}>
            <Line s={22} sw={1.7} color="#b4b6b8"><circle cx="12" cy="12" r="2.8" /><path d="M10 2.5h4l.7 3.3 2 1.2 3.3-1 2 3.5-2.5 2.3v2l2.5 2.3-2 3.5-3.3-1-2 1.2-.7 3.2h-4l-.7-3.2-2-1.2-3.3 1-2-3.5 2.5-2.3v-2L2 9.5 4 6l3.3 1 2-1.2z" strokeLinejoin="round" /></Line>
          </SideItem>
        </Side>
      </Main>

      <Taskbar>
        <Weather>
          <AirIcon />
          <WeatherText>
            <Txt $ls={-0.1}>Không khí: Vừa</Txt>
            <Muted>Ngày mai</Muted>
          </WeatherText>
        </Weather>
        <Slot $w={28} />
        <WinLogo />
        <Slot $w={17} />
        <Search>
          <Line s={21} sw={2.2} color="#e4dedd"><circle cx="10" cy="10" r="8" /><path d="M16 16l6 6.5" /></Line>
          <Txt $ls={0.05}>Tìm kiếm</Txt>
          <Grow />
          <Sparkles />
        </Search>
        <Slot $w={5} />
        <AppSlot><Store /></AppSlot>
        <AppSlot $active><CocCoc s={30} ring /><Mark $on /></AppSlot>
        <AppSlot><Edge /></AppSlot>
        <AppSlot><Folder /><Mark /></AppSlot>
        <AppSlot><Zalo s={30} /><Mark /></AppSlot>
        <Slot $w={353} />
        <Slot $w={24}><Line s={16} sw={3} color="#fff"><path d="M3 17l9-9 9 9" /></Line></Slot>
        <Slot $w={10} />
        <Lang><div>VIE</div><div>TL</div></Lang>
        <Slot $w={8} />
        <Slot $w={30}>
          <Line s={22} sw={1.9} color="#fff"><path d="M1.5 9.5a15 15 0 0 1 21 0M4.8 13a10.3 10.3 0 0 1 14.4 0M8 16.3a5.6 5.6 0 0 1 8 0" /><circle cx="12" cy="19.5" r="1.4" fill="#fff" /></Line>
        </Slot>
        <Slot $w={30}>
          <Line s={21} sw={1.7} color="#fff"><path d="M2 9v6h4l5.5 5V4L6 9zM14.5 9q1.8 3 0 6" /><path d="M17.5 6.5q4 5.5 0 11M20.5 4q5.5 8 0 16" stroke="#6b6567" /></Line>
        </Slot>
        <Slot $w={30}>
          <Line s={21} sw={1.6} color="#fff"><path d="M8 6h11q2 0 2 2v8.5q0 2-2 2H4q-2 0-2-2V12M23 10.5v3.5" /><path d="M9 8.5h8.5q1 0 1 1v5.5q0 1-1 1H5.5q-1 0-1-1V13z" fill="#fff" /><path d="M5.5 2L2 8h2.5L3.5 12 8 6.5H5.2L7 2z" fill="#fff" strokeWidth=".8" /></Line>
        </Slot>
        <Clock><div>10:01 CH</div><div>06/06/2025</div></Clock>
      </Taskbar>
    </Screen>
  );
}
